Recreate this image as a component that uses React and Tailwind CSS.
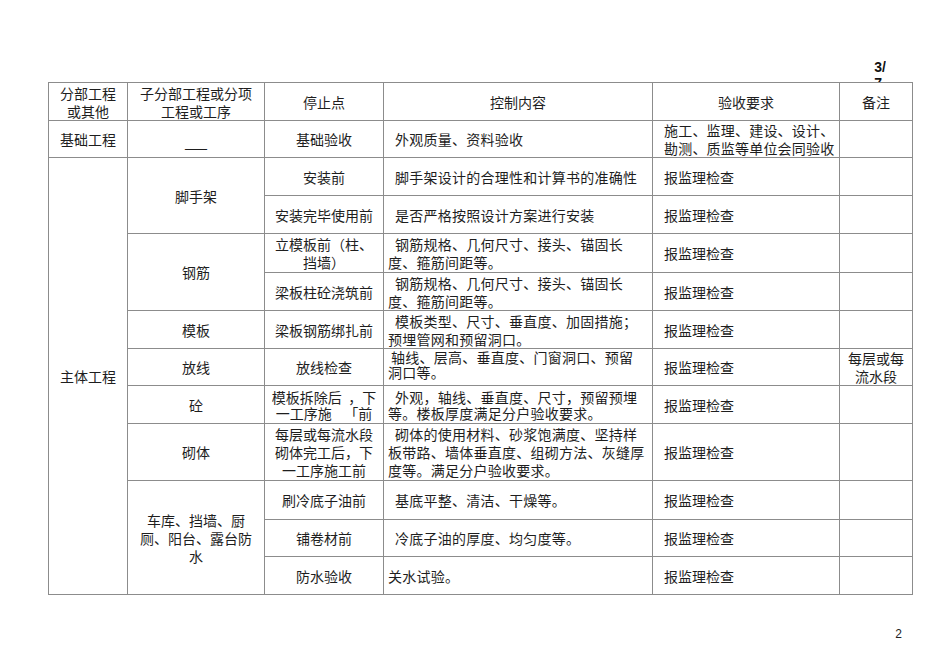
import React from "react";

const font = { fontFamily: '"Noto Sans CJK SC", "Noto Sans", sans-serif' };

const base = "border border-[#8c8c8c] p-0 align-middle whitespace-nowrap";
const center = base + " text-center";
const left4 = base + " text-left pl-[4px] tracking-[0.25px] indent-[7px]";
const left5 = base + " text-left pl-[11px]";

const Check = () => <td className={left5}>报监理检查</td>;
const Empty = () => <td className={base}></td>;

export default function App() {
    return (
        <div className="w-[950px] h-[672px] bg-white text-[#1e1e1e] pt-[59px]" style={font}>
            {/* page marker, half hidden behind the table */}
            <div className="flex justify-end pr-[64px]">
                <div
                    className="h-[23px] overflow-hidden text-[14px] leading-[16px] font-bold text-left text-[#111]"
                    style={{ fontFamily: '"Liberation Sans", Arial, sans-serif' }}
                >
                    3/
                    <br />7
                </div>
            </div>

            <table className="ml-[48px] w-[864px] table-fixed border-collapse text-[14px] leading-[18px]">
                <colgroup>
                    <col className="w-[79px]" />
                    <col className="w-[137px]" />
                    <col className="w-[119px]" />
                    <col className="w-[269px]" />
                    <col className="w-[187px]" />
                    <col className="w-[73px]" />
                </colgroup>
                <tbody>
                    <tr className="h-[38px]">
                        <td className={center}>分部工程<br />或其他</td>
                        <td className={center}>子分部工程或分项<br />工程或工序</td>
                        <td className={center}>停止点</td>
                        <td className={center}>控制内容</td>
                        <td className={center}>验收要求</td>
                        <td className={center}>备注</td>
                    </tr>
                    <tr className="h-[37px]">
                        <td className={center}>基础工程</td>
                        <td className={center + " !align-bottom pb-[1px]"}>——</td>
                        <td className={center}>基础验收</td>
                        <td className={left4}>外观质量、资料验收</td>
                        <td className={left5 + " tracking-[0.2px]"}>施工、监理、建设、设计、<br />勘测、质监等单位会同验收</td>
                        <Empty />
                    </tr>

                    {/* 主体工程 */}
                    <tr className="h-[38px]">
                        <td className={center} rowSpan={11}>主体工程</td>
                        <td className={center} rowSpan={2}>脚手架</td>
                        <td className={center}>安装前</td>
                        <td className={left4}>脚手架设计的合理性和计算书的准确性</td>
                        <Check />
                        <Empty />
                    </tr>
                    <tr className="h-[38px]">
                        <td className={center}>安装完毕使用前</td>
                        <td className={left4}>是否严格按照设计方案进行安装</td>
                        <Check />
                        <Empty />
                    </tr>
                    <tr className="h-[39px]">
                        <td className={center} rowSpan={2}>钢筋</td>
                        <td className={center}>立模板前（柱、<br />挡墙）</td>
                        <td className={left4}>钢筋规格、几何尺寸、接头、锚固长<br />度、箍筋间距等。</td>
                        <Check />
                        <Empty />
                    </tr>
                    <tr className="h-[38px]">
                        <td className={center}>梁板柱砼浇筑前</td>
                        <td className={left4}>钢筋规格、几何尺寸、接头、锚固长<br />度、箍筋间距等。</td>
                        <Check />
                        <Empty />
                    </tr>
                    <tr className="h-[38px]">
                        <td className={center}>模板</td>
                        <td className={center}>梁板钢筋绑扎前</td>
                        <td className={left4}>模板类型、尺寸、垂直度、加固措施；<br />预埋管网和预留洞口。</td>
                        <Check />
                        <Empty />
                    </tr>
                    <tr className="h-[36px]">
                        <td className={center}>放线</td>
                        <td className={center}>放线检查</td>
                        <td className={left4 + " !indent-[3px] !align-top pt-[1px] !leading-[15px]"}>轴线、层高、垂直度、门窗洞口、预留<br />洞口等。</td>
                        <Check />
                        <td className={center}>每层或每<br />流水段</td>
                    </tr>
                    <tr className="h-[38px]">
                        <td className={center}>砼</td>
                        <td className={center + " !leading-[16px]"}>模板拆除后&nbsp;&nbsp;，下<br />一工序施&nbsp;&nbsp;&nbsp;&nbsp;「前</td>
                        <td className={left4 + " !leading-[16px]"}>外观，轴线、垂直度、尺寸，预留预埋<br />等。楼板厚度满足分户验收要求。</td>
                        <Check />
                        <Empty />
                    </tr>
                    <tr className="h-[57px]">
                        <td className={center}>砌体</td>
                        <td className={center}>每层或每流水段<br />砌体完工后，下<br />一工序施工前</td>
                        <td className={left4}>
                            砌体的使用材料、砂浆饱满度、坚持样<br />
                            板带路、墙体垂直度、组砌方法、灰缝厚<br />
                            度等。满足分户验收要求。
                        </td>
                        <Check />
                        <Empty />
                    </tr>
                    <tr className="h-[39px]">
                        <td className={center} rowSpan={3}>车库、挡墙、厨<br />厕、阳台、露台防<br />水</td>
                        <td className={center}>刷冷底子油前</td>
                        <td className={left4}>基底平整、清洁、干燥等。</td>
                        <Check />
                        <Empty />
                    </tr>
                    <tr className="h-[37px]">
                        <td className={center}>铺卷材前</td>
                        <td className={left4}>冷底子油的厚度、均匀度等。</td>
                        <Check />
                        <Empty />
                    </tr>
                    <tr className="h-[38px]">
                        <td className={center}>防水验收</td>
                        <td className={left4 + " !indent-0"}>关水试验。</td>
                        <Check />
                        <Empty />
                    </tr>
                </tbody>
            </table>

            {/* page number */}
            <div
                className="mt-[32px] pr-[48px] text-right text-[12px] leading-[14px] text-[#222]"
                style={{ fontFamily: '"Liberation Sans", Arial, sans-serif' }}
            >
                2
            </div>
        </div>
    );
}
